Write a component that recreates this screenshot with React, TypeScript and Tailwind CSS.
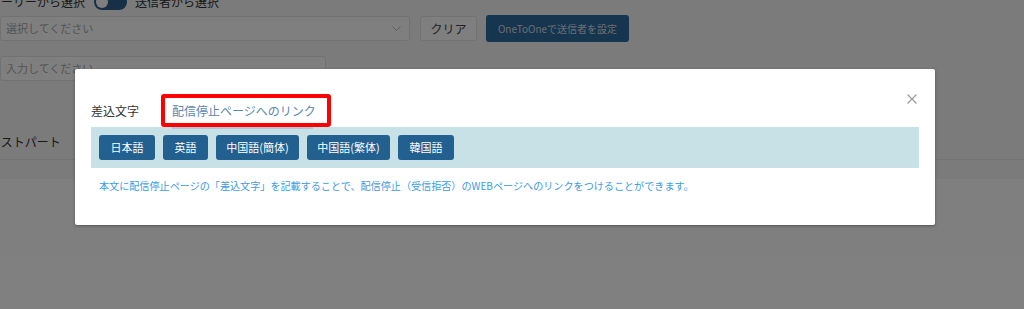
import React from "react";

const font = { fontFamily: '"Noto Sans CJK JP", "Noto Sans", sans-serif' };

export default function App() {
  const langs = [
    { t: "日本語", w: "w-[56px]" },
    { t: "英語", w: "w-[45px]" },
    { t: "中国語(簡体)", w: "w-[83px]" },
    { t: "中国語(繁体)", w: "w-[83px]" },
    { t: "韓国語", w: "w-[56px]" },
  ];
  return (
    <div className="relative w-full h-[309px] overflow-hidden bg-white" style={font}>
      {/* underlying page */}
      <div className="bg-[#f6f6f6] h-[159px] flex flex-col">
        <div className="flex items-end -mt-[6px] h-[16px] text-[12px] leading-[16px] text-[#333] whitespace-nowrap">
          <span className="-ml-[23px]">ストーリーから選択</span>
          <div className="ml-[9px] w-[33px] h-[16px] rounded-full bg-[#2e5f8f] flex items-center pl-[2px]">
            <div className="w-[12px] h-[12px] rounded-full bg-white" />
          </div>
          <span className="ml-[8px]">送信者から選択</span>
        </div>
        <div className="flex items-center mt-[5px]">
          <div className="w-[410px] h-[25px] bg-white border border-[#e4e4e4] rounded-[3px] flex items-center justify-between pl-[5px] pr-[8px] text-[11px] text-[#aaa]">
            <span>選択してください</span>
            <svg width="9" height="6" viewBox="0 0 9 6" fill="none" stroke="#bbb" strokeWidth="1">
              <path d="M0.5 0.5 L4.5 4.5 L8.5 0.5" />
            </svg>
          </div>
          <div className="ml-[10px] w-[57px] h-[25px] bg-white border border-[#e4e4e4] rounded-[3px] flex items-center justify-center text-[12px] text-[#444]">
            クリア
          </div>
          <div className="ml-[9px] w-[143px] h-[27px] bg-[#2c6a9e] rounded-[3px] flex items-center justify-center text-[10px] text-[#d6dde4] whitespace-nowrap">
            OneToOneで送信者を設定
          </div>
        </div>
        <div className="mt-[14px] w-[326px] h-[25px] bg-white border border-[#e4e4e4] rounded-[3px] flex items-center pl-[5px] text-[11px] text-[#aaa]">
          入力してください
        </div>
        <div className="mt-[52px] text-[12px] text-[#333] -ml-[23px] whitespace-nowrap">テキストパート</div>
      </div>
      <div className="h-[20px] bg-[#f6f6f6] border-t border-[#ebebeb]" />

      {/* overlay */}
      <div className="absolute inset-0 bg-black/50">
        <div className="absolute left-[75px] top-[69px] w-[860px] h-[156px] bg-white rounded-[2px] shadow-[0_1px_3px_rgba(0,0,0,0.35)] px-[16px] pt-[25px]">
          <button className="absolute right-[18px] top-[25px]">
            <svg width="10" height="10" viewBox="0 0 10 10" stroke="#9a9a9a" strokeWidth="1.2">
              <path d="M0.5 0.5 L9.5 9.5 M9.5 0.5 L0.5 9.5" />
            </svg>
          </button>
          <div className="flex items-center h-[33px]">
            <span className="w-[70px] text-[12px] text-[#333]">差込文字</span>
            <div className="w-[170px] h-[33px] border-[4px] border-[#ff0000] rounded-[3px] flex items-center pl-[7px] text-[12px] text-[#5b87b0] bg-white whitespace-nowrap">
              配信停止ページへのリンク
            </div>
          </div>
          <div className="relative h-[41px] bg-[#c8e1e6] flex items-center gap-[8px] px-[8px]">
            <div className="absolute left-[81px] top-0 w-[141px] h-[2px] bg-[#a6c8d8]" />
            {langs.map((l) => (
              <div
                key={l.t}
                className={`${l.w} h-[25px] rounded-[3px] bg-[#22608f] text-white text-[11px] flex items-center justify-center`}
              >
                {l.t}
              </div>
            ))}
          </div>
          <p className="mt-[10px] pl-[8px] text-[10.1px] text-[#3d9be0] whitespace-nowrap">
            本文に配信停止ページの「差込文字」を記載することで、配信停止（受信拒否）のWEBページへのリンクをつけることができます。
          </p>
        </div>
      </div>
    </div>
  );
}
